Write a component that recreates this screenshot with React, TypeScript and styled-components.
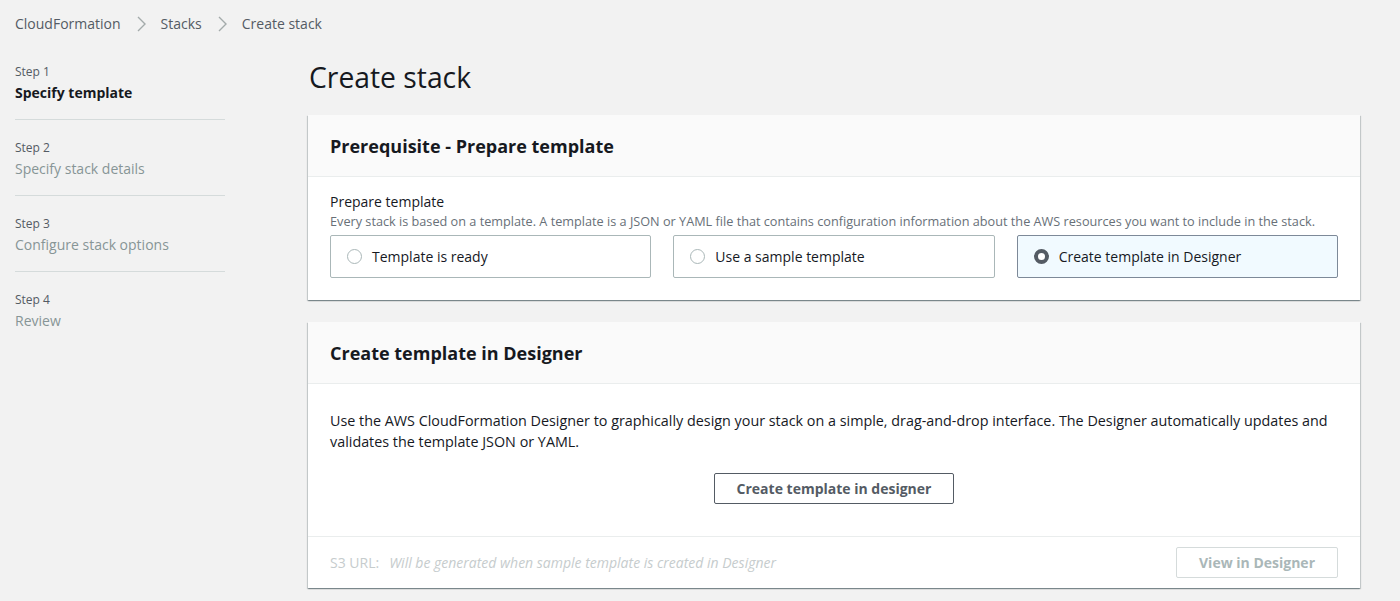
import React from "react";
import styled, { createGlobalStyle } from "styled-components";

const Global = createGlobalStyle`
  html, body { margin: 0; padding: 0; background: #f2f2f2; }
  body { font-family: "Open Sans", "Noto Sans", sans-serif; color: #16191f; }
  * { box-sizing: border-box; }
`;

const Page = styled.div`
  width: 1400px;
  min-height: 601px;
  background: #f2f2f2;
`;

const Breadcrumbs = styled.nav`
  display: flex;
  align-items: center;
  gap: 14px;
  padding: 14px 15px 10px;
  height: 44px;
  font-size: 14px;
  line-height: 20px;
  color: #545b64;
`;

const Crumb = styled.span`
  color: #545b64;
`;

const Chevron = () => (
  <svg width="12" height="18" viewBox="0 0 12 18">
    <polyline points="3,2 10,9 3,16" fill="none" stroke="#a4abab" strokeWidth="1.4" />
  </svg>
);

const Layout = styled.div`
  display: grid;
  grid-template-columns: 308px 1052px;
`;

const Sidebar = styled.ol`
  list-style: none;
  margin: 0;
  padding: 0 0 0 15px;
  width: 225px;
`;

const StepItem = styled.li<{ $last?: boolean }>`
  padding: 20px 0 16px;
  border-bottom: ${(p) => (p.$last ? "none" : "1px solid #d5dbdb")};
`;

const StepNum = styled.div`
  font-size: 12px;
  line-height: 16px;
  color: #545b64;
`;

const StepTitle = styled.div<{ $active?: boolean }>`
  margin-top: 3px;
  font-size: 14px;
  line-height: 20px;
  font-weight: ${(p) => (p.$active ? 700 : 400)};
  color: ${(p) => (p.$active ? "#16191f" : "#879596")};
`;

const Main = styled.main`
  display: flex;
  flex-direction: column;
`;

const PageTitle = styled.h1`
  margin: 15px 0 20px 1px;
  font-size: 28.3px;
  line-height: 36px;
  font-weight: 400;
  color: #16191f;
`;

const Card = styled.section`
  background: #fff;
  margin-bottom: 22px;
  box-shadow: 0 1px 1px 0 rgba(0, 28, 36, 0.3), 1px 1px 1px 0 rgba(0, 28, 36, 0.15),
    -1px 1px 1px 0 rgba(0, 28, 36, 0.15);
`;

const CardHeader = styled.header`
  background: #fafafa;
  border-bottom: 1px solid #eaeded;
  height: 62px;
  display: flex;
  align-items: center;
  padding: 1px 22px 0;
`;

const CardTitle = styled.h2`
  margin: 0;
  font-size: 18px;
  line-height: 24px;
  font-weight: 700;
  color: #16191f;
`;

const CardBody = styled.div<{ $pad: string }>`
  padding: ${(p) => p.$pad};
`;

const FieldLabel = styled.div`
  font-size: 14px;
  line-height: 20px;
  color: #16191f;
`;

const FieldDesc = styled.div`
  font-size: 12.7px;
  line-height: 18px;
  color: #687078;
`;

const Tiles = styled.div`
  margin-top: 5px;
  display: grid;
  grid-template-columns: repeat(3, 1fr);
  gap: 22px;
`;

const Tile = styled.label<{ $selected?: boolean }>`
  height: 43px;
  display: flex;
  align-items: center;
  gap: 10px;
  padding: 0 16px;
  border: 1px solid ${(p) => (p.$selected ? "#7d8998" : "#aab7b8")};
  border-radius: 2px;
  background: ${(p) => (p.$selected ? "#f1faff" : "#fff")};
  font-size: 14px;
  color: #16191f;
`;

const Radio = styled.span<{ $checked?: boolean }>`
  width: 15px;
  height: 15px;
  border-radius: 50%;
  flex: none;
  background: #fff;
  border: ${(p) => (p.$checked ? "4px solid #545b64" : "1px solid #aab7b8")};
`;

const Paragraph = styled.p`
  margin: 0;
  font-size: 14.35px;
  line-height: 21px;
  color: #16191f;
`;

const Center = styled.div`
  display: flex;
  justify-content: center;
  margin-top: 21px;
`;

const Button = styled.button<{ $disabled?: boolean }>`
  height: 31px;
  padding: 0 22px;
  background: #fff;
  border: 1px solid ${(p) => (p.$disabled ? "#d5dbdb" : "#545b64")};
  border-radius: 2px;
  font-family: inherit;
  font-size: 14px;
  font-weight: 700;
  color: ${(p) => (p.$disabled ? "#aab7b8" : "#545b64")};
`;

const Footer = styled.footer`
  border-top: 1px solid #eaeded;
  display: flex;
  align-items: center;
  justify-content: space-between;
  padding: 10px 22px 10px;
`;

const S3Text = styled.div`
  font-size: 14px;
  color: #c6cccd;
  display: flex;
  gap: 10px;
`;

const Italic = styled.span`
  font-style: italic;
`;

export default function App() {
  return (
    <Page>
      <Global />
      <Breadcrumbs>
        <Crumb>CloudFormation</Crumb>
        <Chevron />
        <Crumb>Stacks</Crumb>
        <Chevron />
        <Crumb>Create stack</Crumb>
      </Breadcrumbs>
      <Layout>
        <Sidebar>
          <StepItem>
            <StepNum>Step 1</StepNum>
            <StepTitle $active>Specify template</StepTitle>
          </StepItem>
          <StepItem>
            <StepNum>Step 2</StepNum>
            <StepTitle>Specify stack details</StepTitle>
          </StepItem>
          <StepItem>
            <StepNum>Step 3</StepNum>
            <StepTitle>Configure stack options</StepTitle>
          </StepItem>
          <StepItem $last>
            <StepNum>Step 4</StepNum>
            <StepTitle>Review</StepTitle>
          </StepItem>
        </Sidebar>
        <Main>
          <PageTitle>Create stack</PageTitle>
          <Card>
            <CardHeader>
              <CardTitle>Prerequisite - Prepare template</CardTitle>
            </CardHeader>
            <CardBody $pad="15px 22px 22px">
              <FieldLabel>Prepare template</FieldLabel>
              <FieldDesc>
                Every stack is based on a template. A template is a JSON or YAML file that contains configuration
                information about the AWS resources you want to include in the stack.
              </FieldDesc>
              <Tiles>
                <Tile>
                  <Radio />
                  Template is ready
                </Tile>
                <Tile>
                  <Radio />
                  Use a sample template
                </Tile>
                <Tile $selected>
                  <Radio $checked />
                  Create template in Designer
                </Tile>
              </Tiles>
            </CardBody>
          </Card>
          <Card>
            <CardHeader>
              <CardTitle>Create template in Designer</CardTitle>
            </CardHeader>
            <CardBody $pad="26px 22px 32px">
              <Paragraph>
                Use the AWS CloudFormation Designer to graphically design your stack on a simple, drag-and-drop
                interface. The Designer automatically updates and validates the template JSON or YAML.
              </Paragraph>
              <Center>
                <Button>Create template in designer</Button>
              </Center>
            </CardBody>
            <Footer>
              <S3Text>
                <span>S3 URL:</span>
                <Italic>Will be generated when sample template is created in Designer</Italic>
              </S3Text>
              <Button $disabled>View in Designer</Button>
            </Footer>
          </Card>
        </Main>
      </Layout>
    </Page>
  );
}
